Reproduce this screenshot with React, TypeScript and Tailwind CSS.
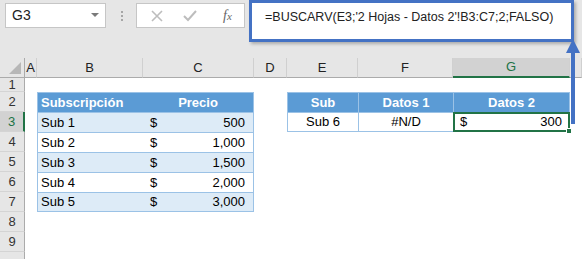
import React from 'react';

interface SubRow {
  row: number;
  name: string;
  price: string;
  band: boolean;
}

const subs: SubRow[] = [
  { row: 3, name: 'Sub 1', price: '500', band: true },
  { row: 4, name: 'Sub 2', price: '1,000', band: false },
  { row: 5, name: 'Sub 3', price: '1,500', band: true },
  { row: 6, name: 'Sub 4', price: '2,000', band: false },
  { row: 7, name: 'Sub 5', price: '3,000', band: true },
];

const columns = [
  { key: 'A', w: 'w-[12px]' },
  { key: 'B', w: 'w-[106px]' },
  { key: 'C', w: 'w-[111px]' },
  { key: 'D', w: 'w-[33px]' },
  { key: 'E', w: 'w-[71px]' },
  { key: 'F', w: 'w-[95px]' },
  { key: 'G', w: 'w-[117px]' },
  { key: '', w: 'w-[12px]' },
];

const RowHeader: React.FC<{ n?: number; selected?: boolean; h?: string }> = ({ n, selected, h = 'h-[20px]' }) => (
  <div
    className={`w-[25px] ${h} shrink-0 flex items-center justify-center text-[13px] font-normal border-b border-[#d4d4d4] ${
      selected
        ? 'bg-[#d2d2d2] text-[#217346] border-r-2 border-r-[#217346]'
        : 'bg-[#e6e6e6] text-[#333] border-r border-r-[#ababab]'
    }`}
  >
    {n}
  </div>
);

const App: React.FC = () => {
  return (
    <div className="w-[582px] h-[259px] overflow-hidden relative bg-white font-['Liberation_Sans',Arial,sans-serif] text-black">
      {/* Formula bar */}
      <div className="h-[58px] bg-[#e6e6e6] flex items-start">
        <div className="mt-[3px] ml-[5px] w-[101px] h-[25px] bg-white border border-[#c6c6c6] flex items-center justify-between pl-[6px] pr-[6px] text-[14px] text-[#222]">
          <span>G3</span>
          <svg width="8" height="5" viewBox="0 0 8 5">
            <path d="M0 0 L8 0 L4 4 Z" fill="#7a7a7a" />
          </svg>
        </div>
        <div className="mt-[11px] ml-[15px] flex flex-col gap-[2px]">
          <div className="w-[2px] h-[2px] bg-[#a6a6a6]" />
          <div className="w-[2px] h-[2px] bg-[#a6a6a6]" />
          <div className="w-[2px] h-[2px] bg-[#a6a6a6]" />
        </div>
        <div className="mt-[3px] ml-[13px] w-[109px] h-[25px] bg-white border border-[#c6c6c6] flex items-center pl-[14px]">
          <svg width="12" height="12" viewBox="0 0 12 12">
            <path d="M1 1 L11 11 M11 1 L1 11" stroke="#bdbdbd" strokeWidth="1.6" />
          </svg>
          <svg width="14" height="12" viewBox="0 0 14 12" className="ml-[20px]">
            <path d="M1 6 L5 10 L13 1" stroke="#bdbdbd" strokeWidth="2" fill="none" />
          </svg>
          <span className="ml-[26px] text-[14px] italic text-[#666] font-['Liberation_Serif',serif]">
            f<span className="text-[11px]">x</span>
          </span>
        </div>
        <div className="ml-[4px] w-[325px] h-[42px] bg-white border-[3px] border-[#4472c4] shadow-[2px_2px_3px_rgba(0,0,0,0.25)] pl-[13px] pt-[5px] text-[12.5px] text-[#222] whitespace-nowrap">
          =BUSCARV(E3;'2 Hojas - Datos 2'!B3:C7;2;FALSO)
        </div>
      </div>

      {/* Column headers */}
      <div className="flex h-[20px]">
        <div className="w-[25px] shrink-0 bg-[#e6e6e6] border-r border-b border-[#ababab] flex items-end justify-end pr-[3px] pb-[3px]">
          <svg width="12" height="12" viewBox="0 0 12 12">
            <path d="M12 0 L12 12 L0 12 Z" fill="#b7b7b7" />
          </svg>
        </div>
        {columns.map((c, i) => (
          <div
            key={i}
            className={`${c.w} shrink-0 flex items-center justify-center text-[13px] border-r border-r-[#d0d0d0] ${
              c.key === 'G'
                ? 'bg-[#d2d2d2] text-[#217346] border-b-2 border-b-[#217346]'
                : 'bg-[#e6e6e6] text-[#222] border-b border-b-[#ababab]'
            }`}
          >
            {c.key}
          </div>
        ))}
      </div>

      {/* Row 1 */}
      <div className="flex">
        <RowHeader n={1} h="h-[14px]" />
      </div>

      {/* Row 2 - table headers */}
      <div className="flex h-[20px] text-[13px] font-bold text-white">
        <RowHeader n={2} />
        <div className="w-[12px]" />
        <div className="w-[106px] bg-[#5b9bd5] border-t border-l border-[#9bc2e6] flex items-center pl-[3px]">
          Subscripción
        </div>
        <div className="w-[111px] bg-[#5b9bd5] border-t border-r border-[#9bc2e6] flex items-center justify-center">
          Precio
        </div>
        <div className="w-[33px]" />
        <div className="w-[71px] bg-[#5b9bd5] border-t border-l border-[#9bc2e6] flex items-center justify-center">
          Sub
        </div>
        <div className="w-[95px] bg-[#5b9bd5] border-t border-l border-[#9bc2e6] flex items-center justify-center">
          Datos 1
        </div>
        <div className="w-[117px] bg-[#5b9bd5] border-t border-l border-r border-[#9bc2e6] flex items-center justify-center">
          Datos 2
        </div>
      </div>

      {/* Rows 3-7 */}
      {subs.map((s) => (
        <div key={s.row} className="flex h-[20px] text-[13px]">
          <RowHeader n={s.row} selected={s.row === 3} />
          <div className="w-[12px]" />
          <div
            className={`w-[106px] border-t border-l border-[#9bc2e6] flex items-center pl-[3px] ${
              s.band ? 'bg-[#ddebf7]' : 'bg-white'
            } ${s.row === 7 ? 'border-b' : ''}`}
          >
            {s.name}
          </div>
          <div
            className={`w-[111px] border-t border-r border-[#9bc2e6] flex items-center justify-between pl-[7px] pr-[8px] ${
              s.band ? 'bg-[#ddebf7]' : 'bg-white'
            } ${s.row === 7 ? 'border-b' : ''}`}
          >
            <span>$</span>
            <span>{s.price}</span>
          </div>
          {s.row === 3 && (
            <>
              <div className="w-[33px]" />
              <div className="w-[71px] border border-r-0 border-[#9bc2e6] flex items-center justify-center">Sub 6</div>
              <div className="w-[95px] border border-r-0 border-[#9bc2e6] flex items-center justify-center">#N/D</div>
              <div className="w-[117px] relative border-2 border-[#217346] flex items-center justify-between pl-[5px] pr-[6px]">
                <span>$</span>
                <span>300</span>
                <div className="absolute -right-[4px] -bottom-[4px] w-[6px] h-[6px] bg-[#217346] border border-white" />
              </div>
            </>
          )}
        </div>
      ))}

      {/* Rows 8-10 */}
      {[8, 9].map((n) => (
        <div key={n} className="flex">
          <RowHeader n={n} />
        </div>
      ))}
      <div className="flex">
        <RowHeader />
      </div>

      {/* Annotation arrow */}
      <svg className="absolute left-[564px] top-[38px]" width="18" height="88" viewBox="0 0 18 88">
        <path d="M9 14 L9 86" stroke="#4472c4" strokeWidth="4" />
        <path d="M2 15 L16 15 L9 1 Z" fill="#4472c4" />
      </svg>
    </div>
  );
};

export default App;
